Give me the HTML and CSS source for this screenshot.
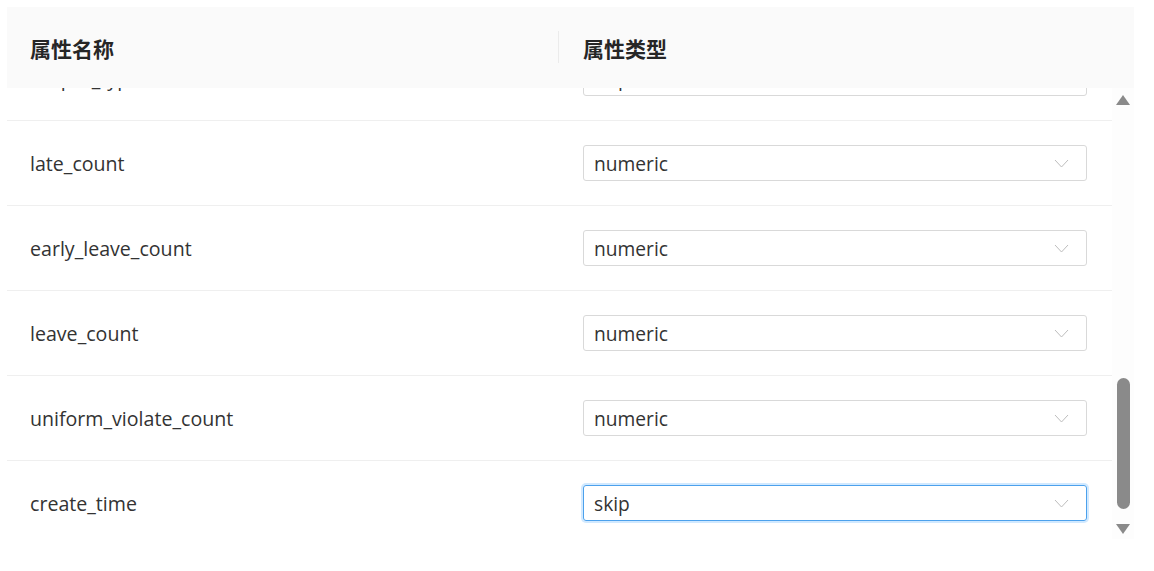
FILE: index.html
```html
<!DOCTYPE html>
<html lang="zh">
<head>
    <meta charset="UTF-8">
    <title>属性设置</title>
    <link rel="stylesheet" href="styles.css">
</head>
<body>

<!-- Attribute table -->
<div class="attr-table">
    <div class="attr-head">
        <div class="head-cell">属性名称</div>
        <div class="head-cell with-divider">属性类型</div>
    </div>

    <div class="attr-body">
        <div class="body-viewport">
            <div class="rows">
                <div class="row">
                    <div class="name-cell">output_type</div>
                    <div class="type-cell"><div class="select"><span>skip</span><svg class="arrow" viewBox="0 0 15 9"><polyline points="1,1 7.5,8 14,1"/></svg></div></div>
                </div>
                <div class="row">
                    <div class="name-cell">late_count</div>
                    <div class="type-cell"><div class="select"><span>numeric</span><svg class="arrow" viewBox="0 0 15 9"><polyline points="1,1 7.5,8 14,1"/></svg></div></div>
                </div>
                <div class="row">
                    <div class="name-cell">early_leave_count</div>
                    <div class="type-cell"><div class="select"><span>numeric</span><svg class="arrow" viewBox="0 0 15 9"><polyline points="1,1 7.5,8 14,1"/></svg></div></div>
                </div>
                <div class="row">
                    <div class="name-cell">leave_count</div>
                    <div class="type-cell"><div class="select"><span>numeric</span><svg class="arrow" viewBox="0 0 15 9"><polyline points="1,1 7.5,8 14,1"/></svg></div></div>
                </div>
                <div class="row">
                    <div class="name-cell">uniform_violate_count</div>
                    <div class="type-cell"><div class="select"><span>numeric</span><svg class="arrow" viewBox="0 0 15 9"><polyline points="1,1 7.5,8 14,1"/></svg></div></div>
                </div>
                <div class="row last">
                    <div class="name-cell">create_time</div>
                    <div class="type-cell"><div class="select focused"><span>skip</span><svg class="arrow" viewBox="0 0 15 9"><polyline points="1,1 7.5,8 14,1"/></svg></div></div>
                </div>
            </div>
        </div>

        <!-- Scrollbar -->
        <div class="scrollbar">
            <div class="sb-up"></div>
            <div class="sb-track">
                <div class="sb-thumb"></div>
            </div>
            <div class="sb-down"></div>
        </div>
    </div>
</div>

</body>
</html>
```

FILE: styles.css
```css
/* General */
body {
    margin: 0;
    background-color: #FFFFFF;
    font-family: "Open Sans", "Noto Sans CJK SC", sans-serif;
    color: #333333;
}

.attr-table {
    margin: 7px 0 0 7px;
    width: 1127px;
}

/* Header */
.attr-head {
    display: grid;
    grid-template-columns: 553px 1fr;
    height: 81px;
    background-color: #FAFAFA;
}

.head-cell {
    display: flex;
    align-items: center;
    padding-left: 23px;
    font-family: "Noto Sans CJK SC", sans-serif;
    font-size: 21px;
    font-weight: bold;
    color: #262626;
}

.with-divider {
    position: relative;
}

.with-divider::before {
    content: "";
    position: absolute;
    left: -2px;
    top: 24px;
    width: 1px;
    height: 32px;
    background-color: #EBEBEB;
}

/* Body */
.attr-body {
    display: flex;
    height: 451px;
}

.body-viewport {
    flex: 1;
    overflow: hidden;
}

.rows {
    margin-top: -52px; /* scrolled down */
}

.row {
    display: grid;
    grid-template-columns: 553px 1fr;
    height: 84px;
    border-bottom: 1px solid #EFEFEF;
}

.row.last {
    border-bottom: none;
}

.name-cell {
    display: flex;
    align-items: center;
    padding-left: 23px;
    font-size: 19.6px;
}

.type-cell {
    display: flex;
    align-items: center;
    padding: 0 25px 0 23px;
}

/* Select box */
.select {
    flex: 1;
    display: flex;
    align-items: center;
    justify-content: space-between;
    height: 34px;
    padding: 0 17px 0 10px;
    border: 1px solid #D9D9D9;
    border-radius: 3px;
    font-size: 19.2px;
}

.select.focused {
    border-color: #4CA1EC;
    box-shadow: 0 0 0 2px rgba(24, 144, 255, 0.2);
}

.arrow {
    width: 15px;
    height: 9px;
    fill: none;
    stroke: #BDBDBD;
    stroke-width: 1;
}

/* Scrollbar */
.scrollbar {
    width: 22px;
    display: flex;
    flex-direction: column;
    align-items: center;
    background-color: #FDFDFD;
}

.sb-up,
.sb-down {
    width: 0;
    height: 0;
    border-left: 7px solid transparent;
    border-right: 7px solid transparent;
}

.sb-up {
    border-bottom: 10px solid #8A8A8A;
    margin: 7px 0;
}

.sb-down {
    border-top: 10px solid #8A8A8A;
    margin: 7px 0 5px;
}

.sb-track {
    flex: 1;
    width: 100%;
    display: flex;
    flex-direction: column;
    justify-content: flex-end;
    align-items: center;
}

.sb-thumb {
    width: 13px;
    height: 131px;
    border-radius: 7px;
    background-color: #8A8A8A;
    margin-bottom: 8px;
}
```
